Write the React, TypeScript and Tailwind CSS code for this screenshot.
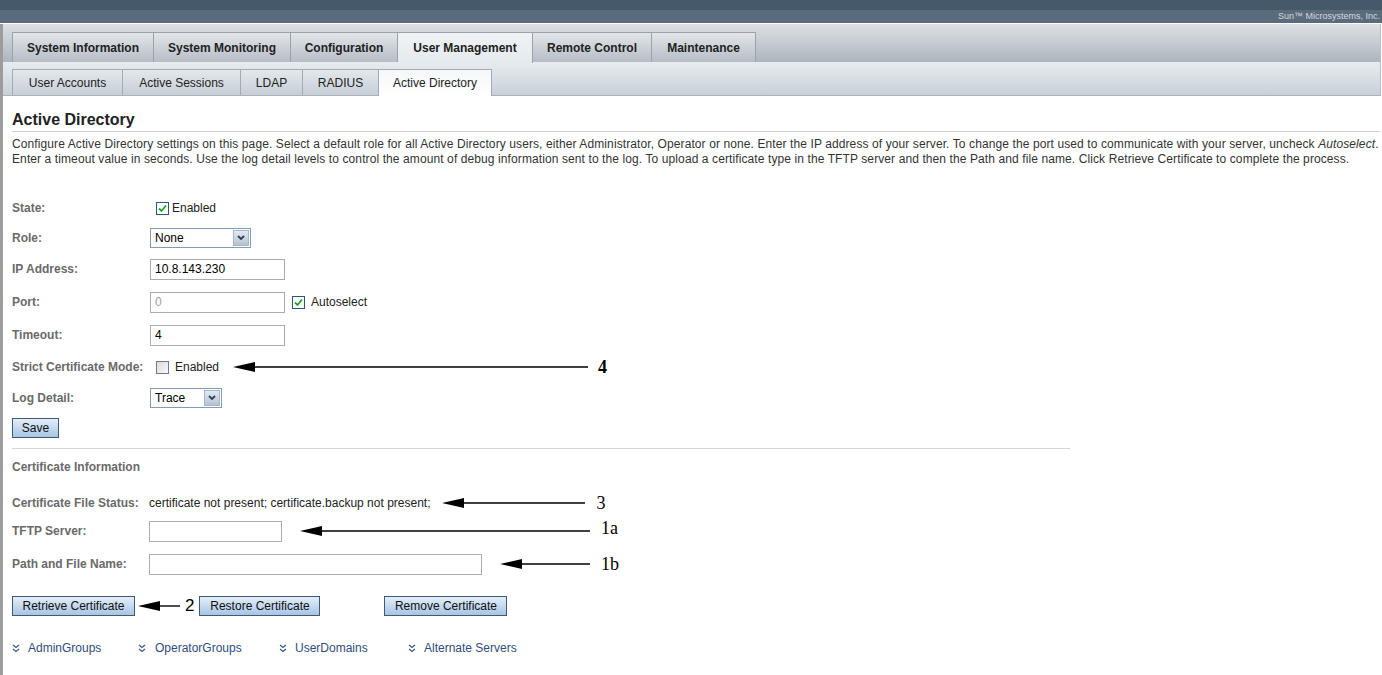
import React from "react";

function Arrow({ w }: { w: number }) {
  return (
    <svg width={w} height={12} viewBox={`0 0 ${w} 12`} className="shrink-0">
      <polygon points="0,6 22,1 22,11" fill="#000" />
      <line x1="18" y1="6" x2={w} y2="6" stroke="#000" strokeWidth="1.4" />
    </svg>
  );
}

function Check({ checked }: { checked: boolean }) {
  return (
    <span
      className={
        checked
          ? "w-[13px] h-[13px] border border-[#2f5478] bg-white flex items-center justify-center shrink-0"
          : "block w-[13px] h-[13px] border border-[#6f7a84] bg-gradient-to-br from-[#dcdcdc] to-[#f8f8f8] shrink-0"
      }
    >
      {checked && (
        <svg width="9" height="9" viewBox="0 0 9 9">
          <polyline points="1,4.5 3.5,7 8,1.5" fill="none" stroke="#22a12a" strokeWidth="1.8" />
        </svg>
      )}
    </span>
  );
}

function Select({ w, value }: { w: string; value: string }) {
  return (
    <div className={`${w} h-[20px] border border-[#7f9db9] bg-white flex items-center justify-between`}>
      <span className="pl-[4px] text-[#000]">{value}</span>
      <span className="w-[16px] h-[16px] mr-[1px] border border-[#a7b5c8] bg-gradient-to-b from-[#e4e9f1] to-[#b6c2d2] flex items-center justify-center">
        <svg width="8" height="6" viewBox="0 0 8 6">
          <polyline points="1,1 4,4 7,1" fill="none" stroke="#2d3f5c" strokeWidth="1.8" />
        </svg>
      </span>
    </div>
  );
}

function Input({ w, value, grey }: { w: string; value?: string; grey?: boolean }) {
  return (
    <div className={`${w} h-[21px] border border-[#a9adb1] bg-white flex items-center pl-[4px] ${grey ? "text-[#a0a0a0]" : "text-[#000]"}`}>
      {value}
    </div>
  );
}

function Btn({ w, children }: { w: string; children: React.ReactNode }) {
  return (
    <div className={`${w} h-[20px] border border-[#3d5a78] bg-gradient-to-b from-[#e3eefa] to-[#a8c5e3] flex items-center justify-center text-[#111] shrink-0`}>
      {children}
    </div>
  );
}

function Row({ label, h, children, lw = "w-[138px]", cls = "" }: { label: string; h: string; children?: React.ReactNode; lw?: string; cls?: string }) {
  return (
    <div className={`flex items-center ${h} ${cls}`}>
      <div className={`${lw} shrink-0 text-[#6a6a6a] font-bold`}>{label}</div>
      <div className="flex items-center">{children}</div>
    </div>
  );
}

function DoubleChevron() {
  return (
    <svg width="8" height="9" viewBox="0 0 8 9" className="shrink-0">
      <polyline points="1,1 4,3.5 7,1" fill="none" stroke="#3a5a8c" strokeWidth="1.3" />
      <polyline points="1,5 4,7.5 7,5" fill="none" stroke="#3a5a8c" strokeWidth="1.3" />
    </svg>
  );
}

const mainTabs = [
  { t: "System Information", w: "w-[142px]" },
  { t: "System Monitoring", w: "w-[137px]" },
  { t: "Configuration", w: "w-[107px]" },
  { t: "User Management", w: "w-[135px]", active: true },
  { t: "Remote Control", w: "w-[119px]" },
  { t: "Maintenance", w: "w-[104px]" },
];

const subTabs = [
  { t: "User Accounts", w: "w-[111px]" },
  { t: "Active Sessions", w: "w-[118px]" },
  { t: "LDAP", w: "w-[62px]" },
  { t: "RADIUS", w: "w-[76px]" },
  { t: "Active Directory", w: "w-[113px]", active: true },
];

export default function App() {
  return (
    <div className="w-[1382px] h-[675px] overflow-hidden bg-white font-['Liberation_Sans',Arial,sans-serif] text-[12px] text-[#333]">
      <div className="h-[10px] bg-[#46596a]" />
      <div className="h-[13px] bg-[#5a6b7b] flex items-center justify-end overflow-hidden">
        <span className="text-[9px] text-[#d3d9df] whitespace-nowrap mr-[2px]">Sun™ Microsystems, Inc.</span>
      </div>
      <div className="h-[1px] bg-white" />
      <div className="border-l-[3px] border-[#9c9c9c] h-[651px]">
        {/* main tabs */}
        <div className="h-[38px] w-[1378px] bg-gradient-to-b from-[#dde1e5] to-[#adb5bd] flex items-end pl-[9px] border-r border-[#b8bec4]">
          {mainTabs.map((m, i) => (
            <div
              key={m.t}
              className={`${m.w} h-[30px] flex items-center justify-center font-bold text-[#222] border-t border-r border-[#9aa3ac] ${i === 0 ? "border-l" : ""} ${
                m.active ? "bg-gradient-to-b from-[#f0f3f5] to-[#e5eaee] h-[31px] -mb-px" : "bg-gradient-to-b from-[#e2e6ea] to-[#b6bdc5]"
              }`}
            >
              {m.t}
            </div>
          ))}
        </div>
        {/* sub tabs */}
        <div className="h-[34px] w-[1378px] bg-gradient-to-b from-[#e7ecf0] to-[#c9d0d7] flex items-end pl-[9px] border-b border-[#aab2ba] border-r border-r-[#b8bec4]">
          {subTabs.map((m, i) => (
            <div
              key={m.t}
              className={`${m.w} flex items-center justify-center text-[#222] border-t border-r border-[#a3acb5] ${i === 0 ? "border-l" : ""} ${
                m.active ? "bg-gradient-to-b from-[#f5f7f9] to-[#ffffff] h-[27px] -mb-px" : "h-[26px] bg-gradient-to-b from-[#e3e8ec] to-[#c7ced5]"
              }`}
            >
              {m.t}
            </div>
          ))}
        </div>

        <div className="pl-[9px]">
          <div className="mt-[14px] h-[22px] border-b border-[#cfcfcf] text-[16px] font-bold text-[#222] leading-[20px] w-[1368px]">
            Active Directory
          </div>
          <div className="mt-[5px] leading-[15px] text-[#333] whitespace-nowrap tracking-[0.1px]">
            Configure Active Directory settings on this page. Select a default role for all Active Directory users, either Administrator, Operator or none. Enter the IP address of your server. To change the port used to communicate with your server, uncheck <i>Autoselect</i>.
            <br />
            Enter a timeout value in seconds. Use the log detail levels to control the amount of debug information sent to the log. To upload a certificate type in the TFTP server and then the Path and file name. Click Retrieve Certificate to complete the process.
          </div>

          <div className="mt-[26px]">
            <Row label="State:" h="h-[30px]">
              <span className="ml-[6px]"><Check checked /></span>
              <span className="ml-[3px] text-[#222]">Enabled</span>
            </Row>
            <Row label="Role:" h="h-[30px]">
              <Select w="w-[101px]" value="None" />
            </Row>
            <Row label="IP Address:" h="h-[32px]">
              <Input w="w-[135px]" value="10.8.143.230" />
            </Row>
            <Row label="Port:" h="h-[34px]">
              <Input w="w-[135px]" value="0" grey />
              <span className="ml-[7px]"><Check checked /></span>
              <span className="ml-[6px] text-[#222]">Autoselect</span>
            </Row>
            <Row label="Timeout:" h="h-[32px]">
              <Input w="w-[135px]" value="4" />
            </Row>
            <Row label="Strict Certificate Mode:" h="h-[32px]">
              <span className="ml-[6px]"><Check checked={false} /></span>
              <span className="ml-[6px] text-[#222]">Enabled</span>
              <span className="ml-[14px] flex"><Arrow w={355} /></span>
              <span className="ml-[10px] font-['Liberation_Serif',serif] font-bold text-[18px] text-[#000] leading-none">4</span>
            </Row>
            <Row label="Log Detail:" h="h-[30px]">
              <Select w="w-[72px]" value="Trace" />
            </Row>
            <div className="h-[30px] flex items-center">
              <Btn w="w-[47px]">Save</Btn>
            </div>
          </div>

          <div className="mt-[5px] w-[1058px] border-t border-[#d6d6d6]" />

          <div className="mt-[8px] h-[20px] flex items-center text-[#6a6a6a] font-bold">Certificate Information</div>

          <Row label="Certificate File Status:" h="h-[24px]" lw="w-[137px]" cls="mt-[14px]">
            <span className="text-[#222]">certificate not present; certificate.backup not present;</span>
            <span className="ml-[12px] flex"><Arrow w={143} /></span>
            <span className="ml-[11px] font-['Liberation_Serif',serif] text-[18px] text-[#000] leading-none">3</span>
          </Row>
          <Row label="TFTP Server:" h="h-[28px]" lw="w-[137px]" cls="mt-[2px]">
            <Input w="w-[133px]" />
            <span className="ml-[18px] flex"><Arrow w={290} /></span>
            <span className="ml-[11px] font-['Liberation_Serif',serif] text-[18px] text-[#000] leading-none -mt-[6px]">1a</span>
          </Row>
          <Row label="Path and File Name:" h="h-[30px]" lw="w-[137px]" cls="mt-[4px]">
            <Input w="w-[333px]" />
            <span className="ml-[18px] flex"><Arrow w={90} /></span>
            <span className="ml-[11px] font-['Liberation_Serif',serif] text-[18px] text-[#000] leading-none">1b</span>
          </Row>

          <div className="mt-[16px] h-[21px] flex items-center">
            <Btn w="w-[123px]">Retrieve Certificate</Btn>
            <span className="ml-[3px] flex"><Arrow w={42} /></span>
            <span className="ml-[5px] text-[17px] text-[#000] leading-none">2</span>
            <span className="ml-[5px]"><Btn w="w-[121px]">Restore Certificate</Btn></span>
            <span className="ml-[64px]"><Btn w="w-[123px]">Remove Certificate</Btn></span>
          </div>

          <div className="mt-[23px] h-[18px] flex items-center text-[#2f4d80]">
            <div className="w-[126px] flex items-center"><DoubleChevron /><span className="ml-[8px]">AdminGroups</span></div>
            <div className="w-[141px] flex items-center"><DoubleChevron /><span className="ml-[9px]">OperatorGroups</span></div>
            <div className="w-[129px] flex items-center"><DoubleChevron /><span className="ml-[8px]">UserDomains</span></div>
            <div className="flex items-center"><DoubleChevron /><span className="ml-[8px]">Alternate Servers</span></div>
          </div>
        </div>
      </div>
    </div>
  );
}
